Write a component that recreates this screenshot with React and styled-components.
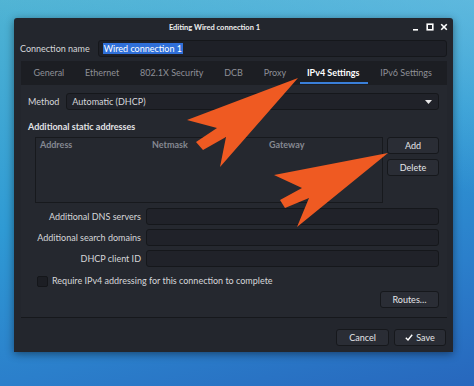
import React from 'react';
import styled, { createGlobalStyle } from 'styled-components';

const Global = createGlobalStyle`
  html, body {
    margin: 0;
    padding: 0;
  }
  body {
    font-family: Lato, "Noto Sans", sans-serif;
    font-size: 9px;
    line-height: 12px;
  }
`

const Desktop = styled.div`
  position: relative;
  width: 474px;
  height: 386px;
  overflow: hidden;
  padding: 18px 0 0 14px;
  box-sizing: border-box;
  background:
    linear-gradient(200deg, rgba(120, 200, 230, 0.55) 0%, rgba(120, 200, 230, 0) 35%),
    linear-gradient(165deg, #4fb3d3 0%, #2f9ad4 45%, #2b7fcb 75%, #2767bd 100%);
`

const Window = styled.div`
  width: 439px;
  height: 334px;
  background: #23262d;
  border-radius: 3px 3px 0 0;
  box-shadow: 0 2px 8px rgba(0, 0, 0, 0.45);
  display: flex;
  flex-direction: column;
  color: #d6d7da;
`

const TitleBar = styled.div`
  height: 19px;
  flex: none;
  display: flex;
  align-items: center;
  justify-content: center;
  padding-right: 38px;
  position: relative;
  font-weight: 700;
  font-size: 7.5px;
  color: #eeeeee;
`

const Controls = styled.div`
  position: absolute;
  right: 5px;
  top: 5px;
  display: flex;
  gap: 6px;
  align-items: center;
`

const NameRow = styled.div`
  display: flex;
  align-items: center;
  padding: 2px 6px 0 6px;
  gap: 8px;
  height: 19px;
  flex: none;
  white-space: nowrap;
`

const Input = styled.div`
  flex: 1;
  height: 17px;
  box-sizing: border-box;
  background: #1e2027;
  border: 1px solid #15171b;
  border-radius: 3px;
  display: flex;
  align-items: center;
  padding-left: 4px;
`

const Selected = styled.span`
  background: #2f6fd8;
  color: #ffffff;
  padding: 0 1px;
  line-height: 11px;
`

const Notebook = styled.div`
  margin: 3px 6px 0 7px;
  display: flex;
  flex-direction: column;
  height: 257px;
  flex: none;
`

const TabBar = styled.div`
  height: 24px;
  flex: none;
  background: #1c1e23;
  display: flex;
  padding-left: 2px;
  white-space: nowrap;
`

const Tab = styled.div`
  padding: 0 10.4px;
  display: flex;
  align-items: center;
  position: relative;
  color: ${p => (p.$active ? '#ffffff' : '#8e9097')};
  font-weight: ${p => (p.$active ? 700 : 400)};
  &::after {
    content: '';
    display: ${p => (p.$active ? 'block' : 'none')};
    position: absolute;
    left: 3px;
    right: 2px;
    bottom: 1px;
    height: 2px;
    background: #3a7fd9;
  }
`

const Panel = styled.div`
  flex: 1;
  background: #25282f;
  border-bottom: 1px solid #16181c;
  padding: 8px 8px 0 7px;
  display: flex;
  flex-direction: column;
`

const MethodRow = styled.div`
  display: flex;
  align-items: center;
  gap: 7px;
`

const Combo = styled.div`
  flex: 1;
  height: 17px;
  box-sizing: border-box;
  background: #202229;
  border: 1px solid #15171b;
  border-radius: 3px;
  display: flex;
  align-items: center;
  justify-content: space-between;
  padding: 0 6px 0 5px;
`

const SectionTitle = styled.div`
  font-weight: 700;
  margin: 11px 0 4px 0;
  color: #e2e3e6;
`

const AddrRow = styled.div`
  display: flex;
  gap: 4px;
  padding-left: 7px;
`

const Table = styled.div`
  flex: 1;
  height: 66px;
  box-sizing: border-box;
  border: 1px solid #17191d;
  background: #25282f;
  display: grid;
  grid-template-columns: 112px 117px 1fr;
  align-content: start;
`

const Head = styled.div`
  color: #868992;
  padding: 1px 4px;
  font-weight: 700;
`

const ButtonCol = styled.div`
  display: flex;
  flex-direction: column;
  gap: 5px;
  width: 52px;
`

const Button = styled.div`
  height: 17px;
  width: ${p => p.$w || 'auto'};
  box-sizing: border-box;
  background: #2a2d35;
  border: 1px solid #16181c;
  border-radius: 3px;
  display: flex;
  align-items: center;
  justify-content: center;
  gap: 3px;
  color: #e4e5e8;
`

const Form = styled.div`
  display: grid;
  grid-template-columns: 113px 1fr;
  column-gap: 5px;
  row-gap: 4px;
  margin-top: 5px;
  align-items: center;
`

const Label = styled.div`
  text-align: right;
  white-space: nowrap;
`

const Field = styled.div`
  height: 17px;
  box-sizing: border-box;
  background: #202229;
  border: 1px solid #15171b;
  border-radius: 3px;
`

const CheckRow = styled.div`
  display: flex;
  align-items: center;
  gap: 4px;
  margin: 8px 0 0 9px;
`

const Box = styled.div`
  width: 9px;
  height: 9px;
  border: 1px solid #14161a;
  background: #1c1e24;
  border-radius: 2px;
`

const RoutesRow = styled.div`
  display: flex;
  justify-content: flex-end;
  margin-top: 4px;
`

const Footer = styled.div`
  flex: 1;
  display: flex;
  justify-content: flex-end;
  align-items: flex-start;
  gap: 5px;
  padding: 11px 7px 0 0;
`

const Overlay = styled.svg`
  position: absolute;
  left: 0;
  top: 0;
  pointer-events: none;
`

export default function App() {
  return (
    <Desktop>
      <Global />
      <Window>
        <TitleBar>
          Editing Wired connection 1
          <Controls>
            <svg width="8" height="8" viewBox="0 0 8 8"><rect x="1" y="6" width="5" height="1.6" fill="#fff" /></svg>
            <svg width="8" height="8" viewBox="0 0 8 8"><rect x="1.2" y="1.2" width="5.6" height="5.6" fill="none" stroke="#fff" strokeWidth="1.6" /></svg>
            <svg width="8" height="8" viewBox="0 0 8 8"><path d="M1.2 1.2 L6.8 6.8 M6.8 1.2 L1.2 6.8" stroke="#fff" strokeWidth="1.6" /></svg>
          </Controls>
        </TitleBar>

        <NameRow>
          <span>Connection name</span>
          <Input><Selected>Wired connection 1</Selected></Input>
        </NameRow>

        <Notebook>
          <TabBar>
            <Tab>General</Tab>
            <Tab>Ethernet</Tab>
            <Tab>802.1X Security</Tab>
            <Tab>DCB</Tab>
            <Tab>Proxy</Tab>
            <Tab $active>IPv4 Settings</Tab>
            <Tab>IPv6 Settings</Tab>
          </TabBar>
          <Panel>
            <MethodRow>
              <span>Method</span>
              <Combo>
                <span>Automatic (DHCP)</span>
                <svg width="7" height="4" viewBox="0 0 7 4"><path d="M0 0 L7 0 L3.5 4 Z" fill="#e8e8e8" /></svg>
              </Combo>
            </MethodRow>

            <SectionTitle>Additional static addresses</SectionTitle>
            <AddrRow>
              <Table>
                <Head>Address</Head>
                <Head>Netmask</Head>
                <Head>Gateway</Head>
              </Table>
              <ButtonCol>
                <Button>Add</Button>
                <Button>Delete</Button>
              </ButtonCol>
            </AddrRow>

            <Form>
              <Label>Additional DNS servers</Label>
              <Field />
              <Label>Additional search domains</Label>
              <Field />
              <Label>DHCP client ID</Label>
              <Field />
            </Form>

            <CheckRow>
              <Box />
              <span>Require IPv4 addressing for this connection to complete</span>
            </CheckRow>

            <RoutesRow>
              <Button $w="59px">Routes…</Button>
            </RoutesRow>
          </Panel>
        </Notebook>

        <Footer>
          <Button $w="53px">Cancel</Button>
          <Button $w="52px">
            <svg width="8" height="7" viewBox="0 0 8 7"><path d="M0.8 3.8 L3 6 L7.2 0.8" stroke="#fff" strokeWidth="1.4" fill="none" /></svg>
            Save
          </Button>
        </Footer>
      </Window>

      <Overlay width="474" height="386" viewBox="0 0 474 386">
        <polygon
          points="298,78 187,120 217,128 196,142 203,150 226,137 220,167"
          fill="#ef5a22"
        />
        <polygon
          points="388,153 274,175 302,188 280,200 285,208 309,198 297,227"
          fill="#ef5a22"
        />
      </Overlay>
    </Desktop>
  );
}
